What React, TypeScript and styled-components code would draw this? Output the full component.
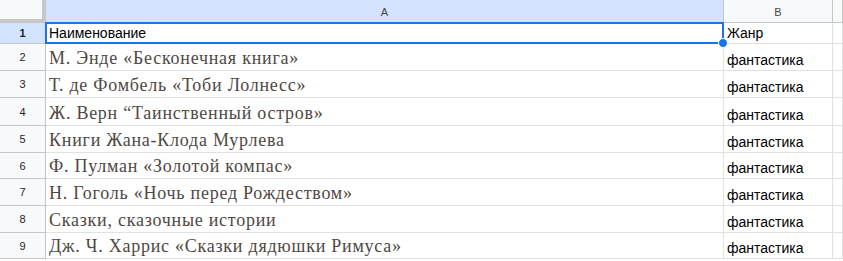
import React from "react";
import styled, { createGlobalStyle } from "styled-components";

const Global = createGlobalStyle`
  html, body { margin: 0; padding: 0; background: #ffffff; }
  body { font-family: "Liberation Sans", Arial, sans-serif; overflow: hidden; }
`;

const Sheet = styled.div`
  position: relative;
  display: grid;
  grid-template-columns: 46px 678px 109px 1fr;
  grid-template-rows: 23px 21px 27px 27px 28px 27px 26px 27px 27px 26px;
  width: 843px;
  height: 261px;
  overflow: hidden;
`;

const Corner = styled.div`
  background: #f8f9fa;
  border-right: 4px solid #c4c7c5;
  border-bottom: 4px solid #c4c7c5;
  box-sizing: border-box;
`;

const ColHead = styled.div<{ $active?: boolean }>`
  box-sizing: border-box;
  background: ${(p) => (p.$active ? "#d3e3fd" : "#f8f9fa")};
  border-right: 1px solid #c4c7c5;
  border-bottom: 1px solid #c4c7c5;
  display: flex;
  align-items: center;
  justify-content: center;
  font-size: 11px;
  color: #444746;
  padding-top: 1px;
`;

const RowHead = styled.div<{ $active?: boolean }>`
  box-sizing: border-box;
  background: ${(p) => (p.$active ? "#d3e3fd" : "#f8f9fa")};
  border-right: 1px solid #c4c7c5;
  border-bottom: 1px solid #c4c7c5;
  display: flex;
  align-items: center;
  justify-content: center;
  font-size: 11px;
  color: #1f1f1f;
  font-weight: ${(p) => (p.$active ? 700 : 400)};
`;

const Cell = styled.div<{ $serif?: boolean }>`
  box-sizing: border-box;
  border-right: 1px solid #e1e1e1;
  border-bottom: 1px solid #e1e1e1;
  display: flex;
  align-items: flex-end;
  padding: 0 3px ${(p) => (p.$serif ? "1px" : "2px")} 3px;
  white-space: nowrap;
  overflow: hidden;
  font-family: ${(p) =>
    p.$serif ? `"Liberation Serif", "DejaVu Serif", serif` : `"Liberation Sans", Arial, sans-serif`};
  font-size: ${(p) => (p.$serif ? "18px" : "14px")};
  letter-spacing: ${(p) => (p.$serif ? "0.75px" : "0")};
  color: ${(p) => (p.$serif ? "#4f4843" : "#000000")};
  line-height: ${(p) => (p.$serif ? "22px" : "16px")};
`;

const Selection = styled.div`
  position: absolute;
  left: 45px;
  top: 22px;
  width: 679px;
  height: 22px;
  box-sizing: border-box;
  border: 2px solid #1a73e8;
  pointer-events: none;
`;

const Handle = styled.div`
  position: absolute;
  left: 719px;
  top: 39px;
  width: 8px;
  height: 8px;
  border-radius: 50%;
  background: #1a73e8;
  border: 1px solid #ffffff;
  box-sizing: content-box;
  margin: -1px 0 0 -1px;
`;

const rows: string[] = [
  "М. Энде «Бесконечная книга»",
  "Т. де Фомбель «Тоби Лолнесс»",
  "Ж. Верн “Таинственный остров»",
  "Книги Жана-Клода Мурлева",
  "Ф. Пулман «Золотой компас»",
  "Н. Гоголь «Ночь перед Рождеством»",
  "Сказки, сказочные истории",
  "Дж. Ч. Харрис «Сказки дядюшки Римуса»",
];

export default function App() {
  return (
    <>
      <Global />
      <Sheet>
        <Corner />
        <ColHead $active>A</ColHead>
        <ColHead>B</ColHead>
        <ColHead />

        <RowHead $active>1</RowHead>
        <Cell>Наименование</Cell>
        <Cell>Жанр</Cell>
        <Cell />

        {rows.map((r, i) => (
          <React.Fragment key={i}>
            <RowHead>{i + 2}</RowHead>
            <Cell $serif>{r}</Cell>
            <Cell>фантастика</Cell>
            <Cell />
          </React.Fragment>
        ))}
        <Selection />
        <Handle />
      </Sheet>
    </>
  );
}
